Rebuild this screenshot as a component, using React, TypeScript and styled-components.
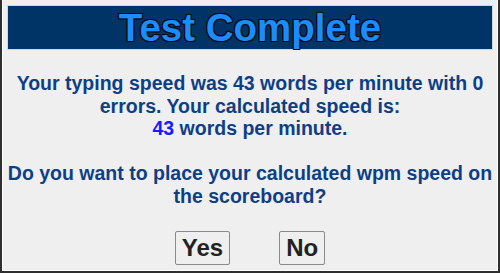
import styled, { createGlobalStyle } from "styled-components";

const GlobalStyle = createGlobalStyle`
  html, body {
    margin: 0;
    padding: 0;
    background: #f0f0f0;
  }
  body {
    font-family: "Liberation Sans", Arial, sans-serif;
  }
`;

const Frame = styled.div`
  box-sizing: border-box;
  width: 500px;
  height: 273px;
  border: 2px solid #2e2e2e;
  border-top: none;
  overflow: hidden;
`;

const Panel = styled.div`
  box-sizing: border-box;
  height: 100%;
  border: 1px solid #ffffff;
  border-top: none;
  background: #efefef;
  padding: 5px 4px 0;
  display: flex;
  flex-direction: column;
  align-items: center;
`;

const Header = styled.h1`
  box-sizing: border-box;
  align-self: stretch;
  margin: 0;
  height: 45px;
  background: #003366;
  border: 1px solid #d6d6d6;
  color: #1a8cff;
  text-shadow:
    1px 0 0 #0a0a0a,
    -1px 0 0 #0a0a0a,
    0 1px 0 #0a0a0a,
    0 -1px 0 #0a0a0a,
    1px 1px 0 #0a0a0a,
    -1px -1px 0 #0a0a0a,
    1px -1px 0 #0a0a0a,
    -1px 1px 0 #0a0a0a;
  font-size: 38.5px;
  font-weight: bold;
  line-height: 43px;
  text-align: center;
`;

const Message = styled.p`
  margin: 22px 0 0;
  color: #0d3f87;
  font-size: 19.5px;
  font-weight: bold;
  line-height: 22.5px;
  text-align: center;
`;

const Highlight = styled.span`
  color: #1a1aff;
`;

const Actions = styled.div`
  display: flex;
  justify-content: center;
  gap: 49px;
  margin-top: 24px;
`;

const Button = styled.button`
  box-sizing: border-box;
  height: 34px;
  padding: 0 6px;
  background: #efefef;
  border: 1px solid #8a8a8a;
  border-radius: 2px;
  color: #222222;
  font-family: "Liberation Sans", Arial, sans-serif;
  font-size: 24px;
  font-weight: bold;
  line-height: 32px;
  cursor: pointer;
`;

export default function App() {
  const wpm = 43;
  const errors = 0;

  return (
    <>
      <GlobalStyle />
      <Frame>
        <Panel>
          <Header>Test Complete</Header>
          <Message>
            Your typing speed was {wpm} words per minute with {errors} errors.
            Your calculated speed is:
            <br />
            <Highlight>{wpm}</Highlight> words per minute.
            <br />
            <br />
            Do you want to place your calculated wpm speed on the scoreboard?
          </Message>
          <Actions>
            <Button>Yes</Button>
            <Button>No</Button>
          </Actions>
        </Panel>
      </Frame>
    </>
  );
}
